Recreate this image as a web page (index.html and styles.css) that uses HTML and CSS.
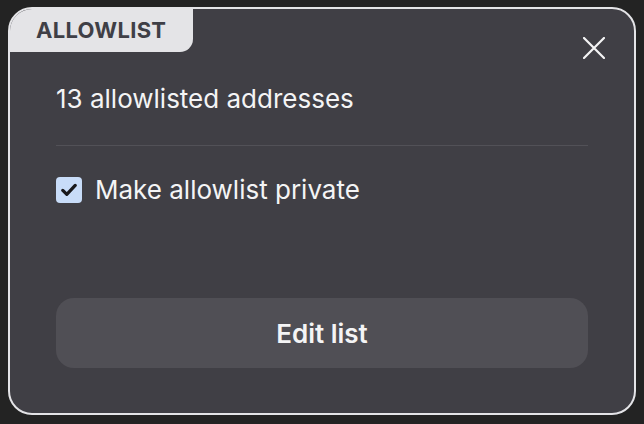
FILE: index.html
```html
<!DOCTYPE html>
<html lang="en">
<head>
<meta charset="utf-8">
<title>Allowlist</title>
<link rel="stylesheet" href="styles.css">
</head>
<body>
<div class="card">
  <div class="header">
    <div class="tab">ALLOWLIST</div>
    <button class="close" aria-label="Close">
      <svg width="22" height="22" viewBox="0 0 22 22"><path d="M1 1 L21 21 M21 1 L1 21" stroke="#f4f4f5" stroke-width="2.2" stroke-linecap="round" fill="none"/></svg>
    </button>
  </div>
  <div class="body">
    <div class="count">13 allowlisted addresses</div>
    <div class="divider"></div>
    <label class="check-row">
      <span class="checkbox">
        <svg width="16" height="14" viewBox="0 0 16 14"><path d="M1.8 7.4 L5.8 11.4 L14.2 2.4" stroke="#18181b" stroke-width="3.2" stroke-linecap="round" stroke-linejoin="round" fill="none"/></svg>
      </span>
      <span class="check-label">Make allowlist private</span>
    </label>
    <button class="edit">Edit list</button>
  </div>
</div>
</body>
</html>
```
FILE: styles.css
```css
* { box-sizing: border-box; }
html, body { margin: 0; padding: 0; }
body {
  background: #232323;
  font-family: Inter, "Noto Sans", sans-serif;
  color: #f4f4f5;
  padding: 7px 8px 0 8px;
}
.card {
  width: 628px;
  height: 408px;
  border: 2px solid #e4e4e7;
  border-radius: 24px;
  background: #403f45;
  overflow: hidden;
  display: flex;
  flex-direction: column;
}
.header {
  display: flex;
  justify-content: space-between;
  align-items: flex-start;
}
.tab {
  background: #e4e4e7;
  color: #3f3f46;
  font-weight: 700;
  font-size: 22px;
  letter-spacing: 0.3px;
  height: 43px;
  line-height: 43px;
  padding: 0 27px 0 26px;
  border-bottom-right-radius: 13px;
}
.close {
  background: none;
  border: 0;
  padding: 0;
  margin: 28px 29px 0 0;
  width: 22px;
  height: 22px;
  display: flex;
  cursor: pointer;
}
.body {
  flex: 1;
  display: flex;
  flex-direction: column;
  padding: 24px 46px 45px 46px;
}
.count {
  font-size: 26px;
  line-height: 32px;
}
.divider {
  height: 1px;
  background: #525157;
  margin-top: 30px;
}
.check-row {
  display: flex;
  align-items: center;
  gap: 13px;
  margin-top: 28px;
}
.checkbox {
  width: 26px;
  height: 26px;
  border-radius: 4px;
  background: #c8dcf8;
  display: flex;
  align-items: center;
  justify-content: center;
}
.check-label {
  font-size: 26px;
  line-height: 32px;
}
.edit {
  margin-top: auto;
  height: 70px;
  border: 0;
  border-radius: 18px;
  background: #504f55;
  color: #f4f4f5;
  font-family: Inter, "Noto Sans", sans-serif;
  font-size: 26px;
  font-weight: 600;
}
```
